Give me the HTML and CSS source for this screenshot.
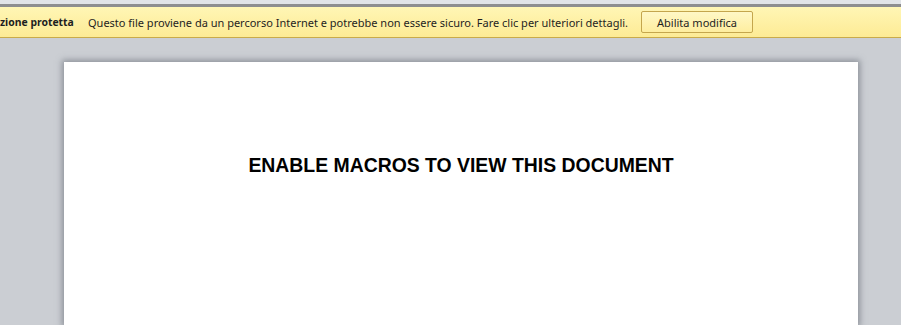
FILE: index.html
```html
<!DOCTYPE html>
<html>
<head>
  <meta charset="utf-8">
  <title>Visualizzazione protetta</title>
  <link rel="stylesheet" href="styles.css">
</head>
<body>

    <div class="ribbon-edge"></div>

    <div class="message-bar">
        <span class="bar-title">zione protetta</span>
        <span class="bar-text">Questo file proviene da un percorso Internet e potrebbe non essere sicuro. Fare clic per ulteriori dettagli.</span>
        <button class="bar-button">Abilita modifica</button>
    </div>

    <div class="workspace">
        <div class="page">
            <h1 class="page-title">ENABLE MACROS TO VIEW THIS DOCUMENT</h1>
        </div>
    </div>

</body>
</html>
```

FILE: styles.css
```css
html, body {
    margin: 0;
    height: 100%;
    overflow: hidden;
}

body {
    background: #cbced3;
    font-family: "Noto Sans", "Open Sans", sans-serif;
}

.ribbon-edge {
    height: 4px;
    background: #e1e4e8;
    border-bottom: 3px solid #8d8e90;
}

.message-bar {
    display: flex;
    align-items: center;
    height: 30px;
    background: linear-gradient(#fff6b5, #fdeb95);
    border-bottom: 1px solid #c9ab4a;
    font-size: 11px;
    color: #1e1e1e;
    white-space: nowrap;
}

.bar-title {
    font-weight: bold;
    font-size: 10.4px;
    width: 88px;
}

.bar-text {
    width: 553px;
}

.bar-button {
    width: 112px;
    height: 22px;
    padding: 0;
    border: 1px solid #c4a64d;
    border-radius: 2px;
    background: linear-gradient(#fff8c6, #feee9f);
    font-family: inherit;
    font-size: 11px;
    color: #1e1e1e;
}

.workspace {
    display: flex;
    padding: 24px 0 0 64px;
}

.page {
    box-sizing: border-box;
    width: 794px;
    height: 263px;
    background: #ffffff;
    box-shadow: 0 0 6px 2px rgba(90, 95, 105, 0.55);
    padding-top: 92px;
}

.page-title {
    margin: 0;
    text-align: center;
    font-family: "Liberation Sans", Arial, sans-serif;
    font-size: 19.4px;
    font-weight: bold;
    color: #000000;
}
```
